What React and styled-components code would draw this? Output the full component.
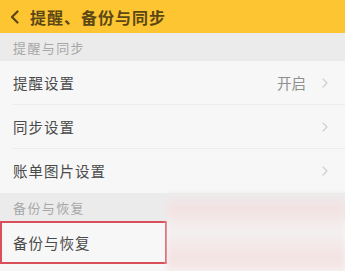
import React from 'react';
import styled, { createGlobalStyle } from 'styled-components';

const GlobalStyle = createGlobalStyle`
  html, body {
    margin: 0;
    padding: 0;
    background: #f7f7f7;
  }
  body {
    font-family: "Noto Sans CJK SC", "Noto Sans", sans-serif;
  }
`;

const rows1 = [
  { label: '提醒设置', value: '开启' },
  { label: '同步设置' },
  { label: '账单图片设置' },
];

const Chevron = ({ color = '#cfcfcf', size = 10, stroke = 1.2 }) => (
  <svg width={size * 0.6} height={size} viewBox="0 0 6 10" fill="none">
    <path d="M1 1l4 4-4 4" stroke={color} strokeWidth={stroke} strokeLinecap="round" strokeLinejoin="round" />
  </svg>
);

const BackIcon = () => (
  <svg width="9" height="14" viewBox="0 0 9 14" fill="none">
    <path d="M7.5 1.5L2 7l5.5 5.5" stroke="#5b4715" strokeWidth="2.2" strokeLinecap="round" strokeLinejoin="round" />
  </svg>
);

const App = () => {
  return (
    <Page>
      <GlobalStyle />
      <Header>
        <BackIcon />
        <Title>提醒、备份与同步</Title>
      </Header>
      <Section>提醒与同步</Section>
      {rows1.map((r, i) => (
        <Row key={r.label} last={i === rows1.length - 1}>
          <Label>{r.label}</Label>
          <Right>
            {r.value && <Value>{r.value}</Value>}
            <Chevron />
          </Right>
        </Row>
      ))}
      <Section>备份与恢复</Section>
      <Row last>
        <Label>备份与恢复</Label>
        <Highlight />
      </Row>
      <Smudge />
    </Page>
  );
};

const Page = styled.div`
  position: relative;
  width: 345px;
  height: 271px;
  overflow: hidden;
  background: #f7f7f7;
`;

const Header = styled.div`
  display: flex;
  align-items: center;
  gap: 11px;
  height: 33px;
  padding: 0 0 0 10px;
  background: #fcc531;
`;

const Title = styled.div`
  color: #5b4715;
  font-size: 16px;
  font-weight: 700;
  letter-spacing: 1px;
`;

const Section = styled.div`
  display: flex;
  align-items: center;
  height: 28px;
  padding: 0 0 0 13px;
  background: #ebebeb;
  color: #a8a8a8;
  font-size: 13px;
  letter-spacing: 1.4px;
`;

const Row = styled.div`
  position: relative;
  display: flex;
  align-items: center;
  justify-content: space-between;
  height: 44px;
  margin: 0 0 0 13px;
  padding: 0 17px 0 0;
  border-bottom: 1px solid ${props => (props.last ? 'transparent' : '#ececec')};
  box-sizing: border-box;
`;

const Label = styled.div`
  color: #4a4a4a;
  font-size: 14.5px;
  letter-spacing: 1px;
`;

const Right = styled.div`
  display: flex;
  align-items: center;
  gap: 16px;
`;

const Value = styled.div`
  color: #8f8f8f;
  font-size: 14.5px;
`;

const Highlight = styled.div`
  position: absolute;
  left: -13px;
  top: 0;
  width: 167px;
  height: 43px;
  border: 2px solid #d9505a;
  box-sizing: border-box;
`;

const Smudge = styled.div`
  position: absolute;
  left: 167px;
  top: 193px;
  width: 178px;
  height: 78px;
  background: linear-gradient(180deg, #ececec 0%, #f3e2e2 20%, #f4f0f0 50%, #f4e4e4 80%, #f6e8e8 100%);
  filter: blur(2px);
`;

export default App;
